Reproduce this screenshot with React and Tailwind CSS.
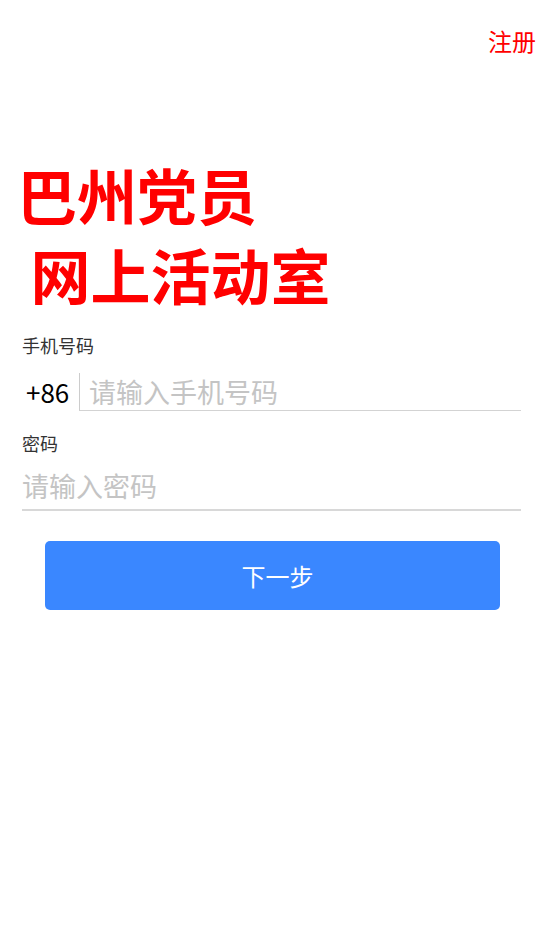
import React from 'react';

export default function App() {
  return (
    <div className="min-h-[946px] bg-white" style={{ fontFamily: '"Noto Sans CJK SC", "Noto Sans", sans-serif' }}>
      <div className="flex justify-end pr-[5px] pt-[24px]">
        <span className="text-[24px] leading-[34px] text-[#ff0000]">注册</span>
      </div>
      <div className="pl-[17px] pt-[96px]">
        <div className="text-[60px] font-bold leading-[80px] text-[#ff0000] whitespace-pre">巴州党员</div>
        <div className="text-[60px] font-bold leading-[80px] text-[#ff0000] whitespace-pre"> 网上活动室</div>
      </div>
      <div className="px-[22px] pt-[18px] pr-[20px]">
        <div className="text-[18px] leading-[26px] text-[#333]">手机号码</div>
        <div className="flex items-center mt-[15px]">
          <span className="w-[57px] pl-[4px] text-[26px] leading-[36px] text-black">+86</span>
          <div className="flex-1 flex items-center border-l border-[#ccc] border-b border-b-[#d3d3d3] h-[38px] pl-[9px]">
            <span className="text-[27px] leading-[36px] text-[#c4c4c4]">请输入手机号码</span>
          </div>
        </div>
        <div className="text-[18px] leading-[26px] text-[#333] mt-[19px]">密码</div>
        <div className="flex items-center border-b-2 border-[#d8d8d8] h-[48px] mt-[7px]">
          <span className="text-[27px] leading-[36px] text-[#c4c4c4]">请输入密码</span>
        </div>
      </div>
      <div className="px-[45px] pr-[41px] mt-[30px]">
        <button className="w-full h-[69px] rounded-[5px] bg-[#3a87ff] pl-[10px] text-white text-[24px]">下一步</button>
      </div>
    </div>
  );
}
